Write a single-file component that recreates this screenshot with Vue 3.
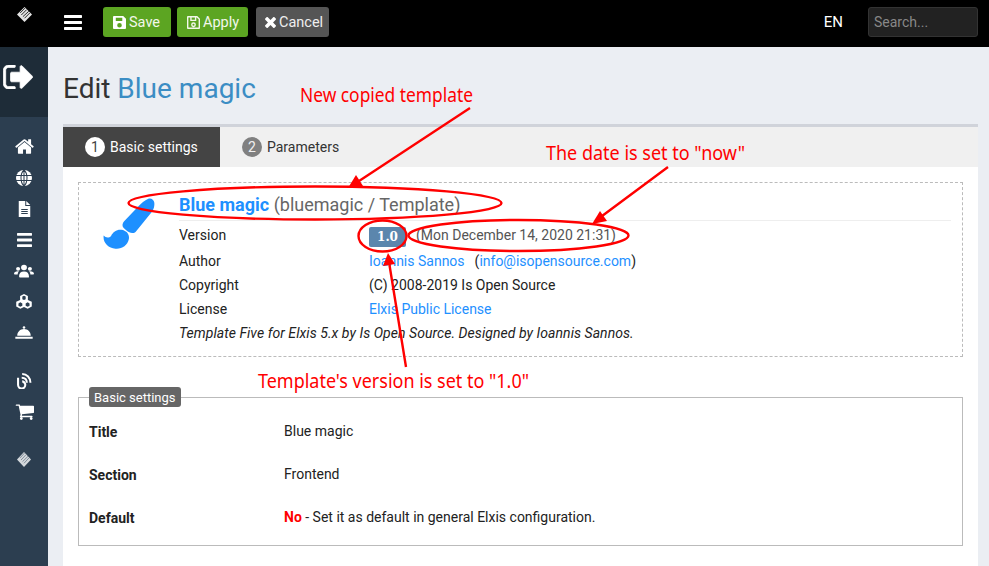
<script setup>
const infoRows = [
  { label: 'Author', key: 'author' },
  { label: 'Copyright', key: 'copy' },
  { label: 'License', key: 'license' }
]
const fields = [
  { label: 'Title', value: 'Blue magic' },
  { label: 'Section', value: 'Frontend' }
]
const P = {
  home: 'M1472 992v480q0 26-19 45t-45 19h-384v-384h-256v384h-384q-26 0-45-19t-19-45v-480q0-1 .5-3t.5-3l575-474 575 474q1 2 1 6zm223-69l-62 74q-8 9-21 11h-3q-13 0-21-7l-692-577-692 577q-12 8-24 7-13-2-21-11l-62-74q-8-10-7-23.5t11-21.5l719-599q32-26 76-26t76 26l244 204v-195q0-14 9-23t23-9h192q14 0 23 9t9 23v408l219 182q10 8 11 21.5t-7 23.5z',
  bars: 'M1664 1344v128q0 26-19 45t-45 19h-1408q-26 0-45-19t-19-45v-128q0-26 19-45t45-19h1408q26 0 45 19t19 45zm0-512v128q0 26-19 45t-45 19h-1408q-26 0-45-19t-19-45v-128q0-26 19-45t45-19h1408q26 0 45 19t19 45zm0-512v128q0 26-19 45t-45 19h-1408q-26 0-45-19t-19-45v-128q0-26 19-45t45-19h1408q26 0 45 19t19 45z',
  out: 'M704 1440q0 4 1 20t.5 26.5-3 23.5-10 19.5-20.5 6.5h-320q-119 0-203.5-84.5t-84.5-203.5v-704q0-119 84.5-203.5t203.5-84.5h320q13 0 22.5 9.5t9.5 22.5q0 4 1 20t.5 26.5-3 23.5-10 19.5-20.5 6.5h-320q-66 0-113 47t-47 113v704q0 66 47 113t113 47h312l11.5 1 11.5 3 8 5.5 7 9 2 13.5zm928-544q0 26-19 45l-544 544q-19 19-45 19t-45-19-19-45v-288h-448q-26 0-45-19t-19-45v-384q0-26 19-45t45-19h448v-288q0-26 19-45t45-19 45 19l544 544q19 19 19 45z',
  cart: 'M704 1536q0 52-38 90t-90 38-90-38-38-90 38-90 90-38 90 38 38 90zm896 0q0 52-38 90t-90 38-90-38-38-90 38-90 90-38 90 38 38 90zm128-1088v512q0 24-16.5 42.5t-40.5 21.5l-1044 122q13 60 13 70 0 16-24 64h920q26 0 45 19t19 45-19 45-45 19h-1024q-26 0-45-19t-19-45q0-11 8-31.5t16-36 21.5-40 15.5-29.5l-177-823h-204q-26 0-45-19t-19-45 19-45 45-19h256q16 0 28.5 6.5t19.5 15.5 13 24.5 8 26 5.5 29.5 4.5 26h1201q26 0 45 19t19 45z',
  times: 'M1490 1322q0 40-28 68l-136 136q-28 28-68 28t-68-28l-294-294-294 294q-28 28-68 28t-68-28l-136-136q-28-28-28-68t28-68l294-294-294-294q-28-28-28-68t28-68l136-136q28-28 68-28t68 28l294 294 294-294q28-28 68-28t68 28l136 136q28 28 28 68t-28 68l-294 294 294 294q28 28 28 68z'
}
</script>

<template>
  <div class="page">
    <header class="top">
      <div class="logo-cell">
        <svg viewBox="1 1 14 14" width="15" height="15">
          <path d="M8 1 15 8 8 15 1 8Z" fill="#e4e4e4" />
          <path d="M4 6.500 8.500 2M5 8.500 10 3.500M6.500 10 12 5M8 11.500 13 6.500" stroke="#222" stroke-width=".9" fill="none" />
        </svg>
      </div>
      <svg class="burger" viewBox="128 256 1536 1280" width="18" height="15"><path :d="P.bars" fill="#fff" /></svg>
      <button class="btn green save">
        <svg viewBox="1 1 14 14" width="13" height="13"><path fill-rule="evenodd" d="M2 1h10l3 3v10a1 1 0 0 1-1 1H2a1 1 0 0 1-1-1V2a1 1 0 0 1 1-1ZM4 3v3.500h7V3ZM8 8.500a2.500 2.500 0 1 0 0 5 2.500 2.500 0 0 0 0-5Z" fill="#fff" /></svg>
        Save
      </button>
      <button class="btn green apply">
        <svg viewBox="1 1 14 14" width="13" height="13"><path fill-rule="evenodd" d="M2 1h10l3 3v10a1 1 0 0 1-1 1H2a1 1 0 0 1-1-1V2a1 1 0 0 1 1-1ZM2.500 2.500v11h11V4.600L11.400 2.500H11V6.500H4.500V2.500ZM6 2.500V5h3.500V2.500ZM8 7.800a2.600 2.600 0 1 0 0 5.200 2.600 2.600 0 0 0 0-5.200ZM8 9.300a1.100 1.100 0 1 1 0 2.200 1.100 1.100 0 0 1 0-2.200Z" fill="#f2f7ea" /></svg>
        Apply
      </button>
      <button class="btn grey cancel">
        <svg viewBox="300 380 1190 1170" width="11" height="11"><path :d="P.times" fill="#fff" /></svg>
        Cancel
      </button>
      <span class="lang">EN</span>
      <input class="search" placeholder="Search..." />
    </header>

    <div class="body">
      <aside class="side">
        <div class="side-head">
          <svg viewBox="64 256 1568 1280" width="30" height="24"><path :d="P.out" fill="#fff" stroke="#fff" stroke-width="40" /></svg>
        </div>
        <nav class="side-nav">
          <div class="slot"><svg width="19" height="15" viewBox="90 240 1612 1312"><path :d="P.home" /></svg></div>
          <div class="slot"><svg width="16" height="16" viewBox="2 2 14 14"><circle cx="9" cy="9" r="7" /><path d="M2 6.800h14M2 11.200h14M9 2v14M9 2C5.500 5 5.500 13 9 16M9 2c3.500 3 3.500 11 0 14" stroke="#2c3e50" stroke-width=".9" fill="none" /></svg></div>
          <div class="slot"><svg width="13" height="16" viewBox="3.500 1 11.500 16"><path fill-rule="evenodd" d="M3.500 1H10v5h5v11H3.500ZM11 1l4 4h-4ZM6 9v1h6.500V9ZM6 11v1h6.500v-1ZM6 13v1h6.500v-1Z" /></svg></div>
          <div class="slot"><svg width="15" height="14" viewBox="128 256 1536 1280" preserveAspectRatio="none"><path :d="P.bars" /></svg></div>
          <div class="slot"><svg width="20" height="14" viewBox="0 0 22 16" preserveAspectRatio="none"><circle cx="11" cy="4" r="3.200" /><circle cx="4.500" cy="5.500" r="2.200" /><circle cx="17.500" cy="5.500" r="2.200" /><path d="M5.500 14.500c0-4 1.800-6 5.500-6s5.500 2 5.500 6c0 .7-.5 1-1 1h-9c-.5 0-.5-.3-.5-1ZM0 11.500C0 9.500 1.500 8.300 4.500 8.300c.5 0 .8 0 .9.100-.9 1-1.400 2.300-1.400 3.600H1c-.6 0-1-.1-1-.5ZM22 11.500c0-2-1.500-3.200-4.500-3.200-.5 0-.8 0-.9.100.9 1 1.400 2.300 1.400 3.600h3c.6 0 1-.1 1-.5Z" /></svg></div>
          <div class="slot"><svg width="16" height="15" viewBox="2 1.500 14 13.500"><path fill-rule="evenodd" d="M9 1.500l3.500 1.700v3.600L16 8.500v4.300l-3.700 2-3.300-1.700-3.300 1.700-3.700-2V8.500l3.500-1.700V3.200ZM7.500 3.800v2.400L9 7l1.500-.8V3.800L9 3ZM4 10v2l1.700 1 1.800-1v-2L5.700 9ZM10.500 10v2l1.800 1 1.700-1v-2l-1.700-1Z" /></svg></div>
          <div class="slot"><svg width="18" height="13" viewBox="0 0 18 13.500"><circle cx="9" cy="1.600" r="1.300" /><path d="M2 10c0-4 3-7 7-7s7 3 7 7ZM0 11.200h18V13.200H0Z" /></svg></div>
          <div class="nav-gap" />
          <div class="slot"><svg width="16" height="16" viewBox="2.500 1 14.500 15.500"><path d="M3 5.500h2v7a2.500 2.500 0 0 0 5 0c0-1.200-.7-2-2-2.400V8c2.500.3 4 2.200 4 4.500a4.500 4.500 0 0 1-9 0Z" /><path d="M7.500 5.500c3 0 5 2 5 5" stroke="#fff" stroke-width="1.900" fill="none" /><path d="M8 2c4.500 0 8 3.500 8 8.500" stroke="#fff" stroke-width="1.900" fill="none" /></svg></div>
          <div class="slot"><svg width="19" height="17" viewBox="0 128 1728 1536"><path :d="P.cart" /></svg></div>
          <div class="nav-gap" />
          <div class="slot"><svg width="14" height="15" viewBox="1 1 14 14" preserveAspectRatio="none"><path d="M8 1 15 8 8 15 1 8Z" fill="#d4d8dc" /><path d="M4 6.500 8.500 2M5 8.500 10 3.500M6.500 10 12 5M8 11.500 13 6.500" stroke="#7a8794" stroke-width=".9" fill="none" /></svg></div>
        </nav>
      </aside>

      <main class="main">
        <h1 class="title">Edit <span>Blue magic</span></h1>
        <section class="panel">
          <div class="tabs">
            <div class="tab active"><b class="num">1</b>Basic settings</div>
            <div class="tab"><b class="num">2</b>Parameters</div>
          </div>
          <div class="content">
            <div class="info">
              <svg class="brush" viewBox="100 80 155 158" width="52" height="53">
                <path d="M235 85C243 82 252 88 253 97C254 105 252 115 246 124L197 184C190 190 178 188 170 180L161 172C156 165 158 158 163 152L205 108C214 99 224 90 235 85Z" fill="#1e90ff" />
                <path d="M102 195C108 202 118 203 124 196C130 184 142 176 155 178C170 180 180 192 177 206C173 225 155 236 137 234C115 232 99 215 102 195Z" fill="#1e90ff" />
              </svg>
              <div class="info-body">
                <div class="name"><a>Blue magic</a> (bluemagic / Template)</div>
                <div class="row ver">
                  <span class="lbl">Version</span>
                  <span class="val"><i class="badge">1.0</i><em class="date">(Mon December 14, 2020 21:31)</em></span>
                </div>
                <div v-for="r in infoRows" :key="r.key" class="row">
                  <span class="lbl">{{ r.label }}</span>
                  <span v-if="r.key === 'author'" class="val"><a>Ioannis Sannos</a><span class="mail">(<a>info@isopensource.com</a>)</span></span>
                  <span v-else-if="r.key === 'copy'" class="val">(C) 2008-2019 Is Open Source</span>
                  <span v-else class="val"><a>Elxis Public License</a></span>
                </div>
                <div class="desc">Template Five for Elxis 5.x by Is Open Source. Designed by Ioannis Sannos.</div>
              </div>
            </div>

            <fieldset class="fs">
              <legend>Basic settings</legend>
              <div v-for="f in fields" :key="f.label" class="f-row">
                <label>{{ f.label }}</label>
                <span>{{ f.value }}</span>
              </div>
              <div class="f-row">
                <label>Default</label>
                <span><b class="no">No</b> - Set it as default in general Elxis configuration.</span>
              </div>
            </fieldset>
          </div>
        </section>
      </main>
    </div>

    <svg class="notes" viewBox="0 0 989 566" width="989" height="566">
      <g fill="none" stroke="#f00" stroke-width="2.400">
        <ellipse cx="315" cy="203" rx="186.500" ry="16.500" />
        <ellipse cx="518.500" cy="235.500" rx="110" ry="15.500" />
        <ellipse cx="382.500" cy="236" rx="24" ry="15.500" />
        <path d="M470 108 356 183M668 167 598 219M406 367 389 262" />
      </g>
      <g fill="#f00">
        <path d="M348 188 356 175 363 186Z" />
        <path d="M592 224 600 211 607 221Z" />
        <path d="M388 253 383 266 395 264Z" />
      </g>
      <text x="300" y="102" textLength="173" lengthAdjust="spacingAndGlyphs">New copied template</text>
      <text x="546" y="160" textLength="199" lengthAdjust="spacingAndGlyphs">The date is set to "now"</text>
      <text x="258" y="387.500" textLength="271" lengthAdjust="spacingAndGlyphs">Template's version is set to "1.0"</text>
    </svg>
  </div>
</template>

<style>
html, body { margin: 0; background: #ebeef3; }
</style>

<style scoped>
.page {
  position: relative;
  width: 989px;
  height: 566px;
  overflow: hidden;
  font-family: Roboto, "Liberation Sans", sans-serif;
  font-size: 14px;
  color: #222;
  background: #ebeef3;
}
.top {
  height: 47px;
  box-sizing: border-box;
  padding-bottom: 3px;
  background: #000;
  display: flex;
  align-items: center;
}
.logo-cell { width: 48px; height: 44px; display: flex; justify-content: center; padding-top: 7px; box-sizing: border-box; }
.burger { margin: 0 21px 0 16px; }
.btn {
  height: 30px;
  border: 0;
  border-radius: 3px;
  font: 14.500px Roboto, sans-serif;
  display: flex;
  align-items: center;
  gap: 3px;
  padding: 0 0 0 10px;
  box-sizing: border-box;
}
.green { background: #5ca522; color: #f2f7ea; }
.grey { background: #555; color: #eee; }
.save { width: 68px; margin-right: 6px; }
.apply { width: 71px; margin-right: 8px; }
.cancel { width: 73px; padding-left: 9px; }
.lang { margin-left: auto; color: #fff; font-size: 15px; margin-right: 25px; }
.search {
  width: 110px;
  height: 30px;
  box-sizing: border-box;
  margin-right: 11px;
  padding: 0 5px;
  background: #222;
  border: 1px solid #333;
  border-radius: 3px;
  color: #999;
  font: 14px Roboto, sans-serif;
}
.search::placeholder { color: #888; opacity: 1; }
.body { display: flex; height: 519px; }
.side { width: 48px; flex: none; background: #2c3e50; display: flex; flex-direction: column; }
.side-head { height: 70px; background: #1e2c38; padding: 18px 0 0 3px; box-sizing: border-box; }
.side-head svg { display: block; }
.side-nav { display: flex; flex-direction: column; padding-top: 14px; }
.slot { height: 31px; display: flex; align-items: center; justify-content: center; }
.slot svg { fill: #fff; display: block; }
.nav-gap { height: 17px; }
.main { flex: 1; padding: 0 11px 0 15px; min-width: 0; }
.title { margin: 24px 0 18px; font-size: 28px; line-height: 35px; font-weight: 400; color: #333; }
.title span { color: #3b8dc4; }
.panel { border-top: 3px solid #d0d3da; background: #fff; height: 442px; }
.tabs { display: flex; height: 40px; background: #f0f0f0; }
.tab { display: flex; align-items: center; padding: 0 22px; font-size: 14px; color: #333; gap: 5px; }
.tab.active { background: #444; color: #fff; width: 157px; box-sizing: border-box; }
.num { width: 20px; height: 20px; border-radius: 50%; background: #808080; color: #f0f0f0; font-weight: 400; font-size: 14px; line-height: 20px; text-align: center; }
.active .num { background: #fff; color: #444; }
.content { padding: 15px 15px 0; }
.info {
  border: 1px dashed #bbb;
  height: 175px;
  box-sizing: border-box;
  position: relative;
  padding: 11px 11px 0 100px;
}
.brush { position: absolute; left: 24px; top: 14px; }
.name { font-size: 18px; line-height: 22px; padding-bottom: 4px; border-bottom: 1px solid #eee; color: #666; }
.name a { color: #1e90ff; font-weight: 700; }
.row { display: flex; line-height: 24px; }
.row.ver { height: 28px; align-items: center; }
.lbl { width: 190px; flex: none; }
a { color: #1e90ff; }
.badge { display: inline-block; background: #5b86ad; color: #fff; font: 700 12px/20px "DejaVu Serif", serif; width: 37px; text-align: center; border-radius: 2px; margin-right: 10px; vertical-align: -1px; }
.date { font-style: normal; color: #555; }
.mail { margin-left: 10px; }
.desc { font-style: italic; line-height: 24px; letter-spacing: .055px; }
.fs {
  margin: 30px 0 0;
  padding: 9px 10px 0;
  border: 1px solid #bbb;
  height: 159px;
  box-sizing: border-box;
}
.fs legend { background: #666; color: #fff; font-size: 13px; line-height: 19px; padding: 1px 5px 0; border-radius: 3px; }
.f-row { display: flex; height: 43px; align-items: flex-start; padding-top: 7px; box-sizing: border-box; }
.f-row label { width: 195px; font-weight: 700; padding-top: 1px; flex: none; }
.no { color: #f00; }
.notes { position: absolute; left: 0; top: 0; pointer-events: none; }
.notes text { fill: #f00; font-family: "Noto Sans", "DejaVu Sans", sans-serif; font-size: 19.500px; }
</style>
